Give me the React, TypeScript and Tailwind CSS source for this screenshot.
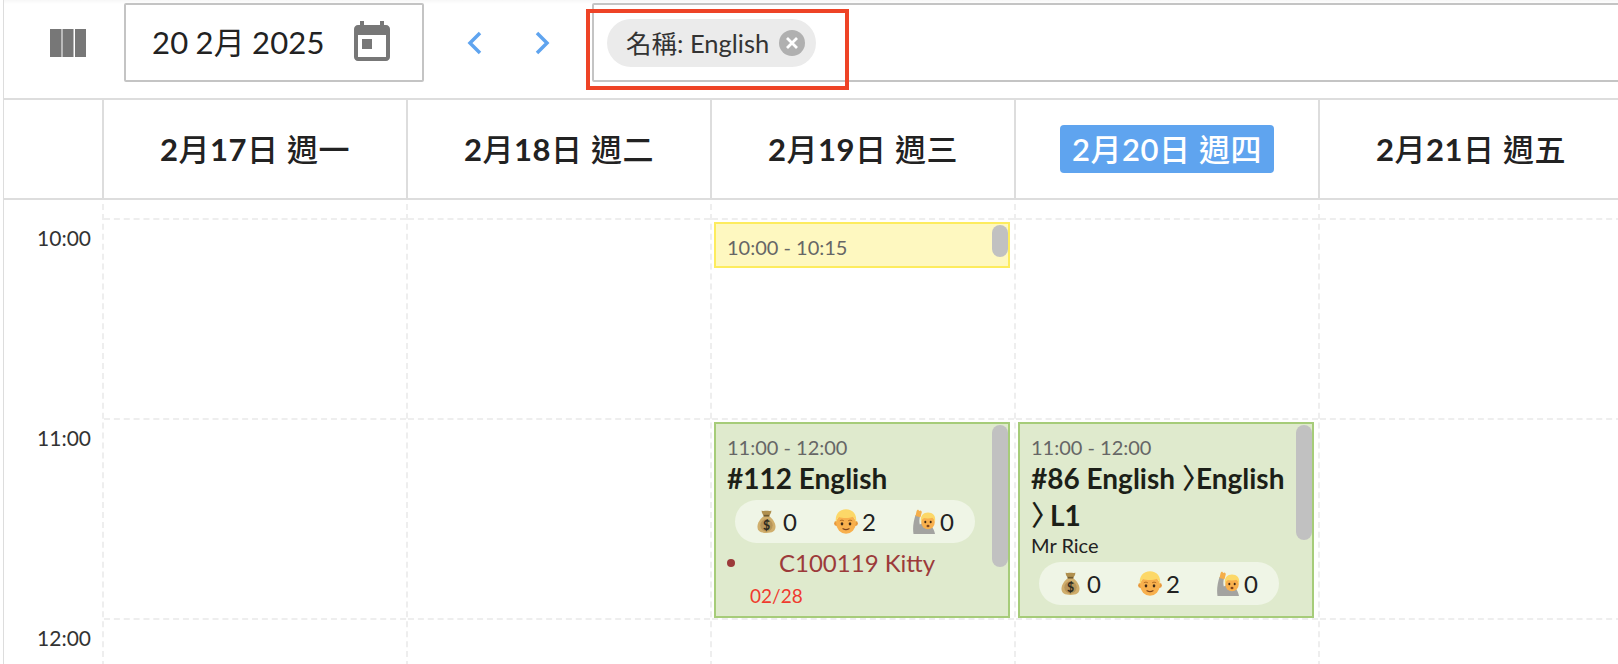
const FONT = "font-['Lato','Noto_Sans_CJK_TC',sans-serif]";

function MoneyBag() {
  return (
    <svg width="19" height="25" viewBox="0 0 20 26" className="shrink-0">
      <path d="M5 1.500c1.500 1 3.300.3 5 .3s3.500.7 5-.3c.5 2-1.200 4.300-2.300 5.700H7.300C6.200 5.800 4.500 3.500 5 1.500z" fill="#b0904f" />
      <path d="M7.500 7.200h5c4 2.800 7 7.400 7 11.300 0 4.700-3.500 6.500-9.500 6.500S.5 23.200.5 18.500c0-3.900 3-8.500 7-11.300z" fill="#d0ae6c" />
      <path d="M7 6h6v1.800H7z" fill="#6f5a30" />
      <circle cx="10" cy="17" r="6.500" fill="#b7955a" />
      <text x="10" y="21.500" fontSize="13" fontWeight="700" textAnchor="middle" fill="#2c2a20" fontFamily="Lato, sans-serif">$</text>
    </svg>
  );
}

function Boy() {
  return (
    <svg width="24" height="25" viewBox="0 0 24 25" className="shrink-0">
      <circle cx="2.500" cy="14.500" r="2.400" fill="#e8983a" />
      <circle cx="21.500" cy="14.500" r="2.400" fill="#e8983a" />
      <ellipse cx="12" cy="14.500" rx="9.800" ry="10.300" fill="#f8b04d" />
      <path d="M2 14C.5 5 5.500.3 12 .3S23.500 5 22 14c-.6-3-1.600-5-3-6.300-3.700 1.500-10 1.700-14 .3C3.500 9.200 2.600 11.300 2 14z" fill="#fcd868" />
      <path d="M5.800 11.800c1.200-.8 3-.8 4 0M14.200 11.800c1-.8 2.800-.8 4 0" stroke="#a8641f" strokeWidth=".9" fill="none" />
      <ellipse cx="8" cy="14.800" rx="1.300" ry="1.600" fill="#3e2a16" />
      <ellipse cx="16" cy="14.800" rx="1.300" ry="1.600" fill="#3e2a16" />
      <path d="M9 19.700c1.800 1 4.200 1 6 0" stroke="#7f441b" strokeWidth="1.200" fill="none" strokeLinecap="round" />
    </svg>
  );
}

function RaisingHand() {
  return (
    <svg width="24" height="25" viewBox="0 0 24 25" className="shrink-0">
      <path d="M.5 25C-.5 19 .5 12 2.500 6l4.500 1.500c-.8 3-.8 5.500-.2 8 2-1.300 3.700-1.600 5.700-1 4.500.4 8.500 4 9.500 10.500z" fill="#a3a3a0" />
      <path d="M2.500 7 3.500 2.600C3.800 1.100 4.800.4 5.600 1l.5.900L7.600 1.500c1 .5 1.500 1.500 1 2.500L7.500 8.200z" fill="#f5ae49" />
      <ellipse cx="15" cy="13" rx="6.800" ry="7.300" fill="#f8b04d" />
      <path d="M8 13C7 6.500 10.500 3.600 15 3.600s8.200 2.900 7 9.400c-.5-2-1.400-3.500-2.700-4.300-2.700 1-6 1-8.300.3C9.700 9.700 8.600 11.200 8 13z" fill="#fcd868" />
      <ellipse cx="12.300" cy="13" rx="1" ry="1.200" fill="#3e2a16" />
      <ellipse cx="17.700" cy="13" rx="1" ry="1.200" fill="#3e2a16" />
      <ellipse cx="15" cy="17" rx="1.500" ry="1.200" fill="#7f441b" />
    </svg>
  );
}

function Stats() {
  return (
    <div className="flex h-[43px] w-[240px] items-center rounded-full bg-[#eff5e6] pl-[22px] text-[24px] leading-none text-[#222]">
      <span className="flex w-[77px] items-center gap-[7px]"><MoneyBag />0</span>
      <span className="flex w-[79px] items-center gap-[4px]"><Boy />2</span>
      <span className="flex items-center gap-[3px]"><RaisingHand />0</span>
    </div>
  );
}

function Scrollbar({ h }: { h: string }) {
  return <div className={`absolute top-0 right-0 w-4 rounded-full bg-[#c1c1c1] ${h}`} />;
}

const days: [string, string, string, boolean][] = [
  ["2", "17", "週一", false],
  ["2", "18", "週二", false],
  ["2", "19", "週三", false],
  ["2", "20", "週四", true],
  ["2", "21", "週五", false],
];

function DayLabel({ m, d, w }: { m: string; d: string; w: string }) {
  return (
    <>
      {m}
      <span className="font-medium">月</span>
      {d}
      <span className="font-medium">日 {w}</span>
    </>
  );
}

function HourCells() {
  return (
    <>
      {[0, 1, 2].map((i) => (
        <div key={i} className="h-[200px] border-t-2 border-dashed border-[#eeeeee]" />
      ))}
    </>
  );
}

function EventEnglish112() {
  return (
    <div className="absolute top-[218px] left-[2px] h-[196px] w-[296px] border-2 border-[#a6cc79] bg-[#dfeacd] pl-[11px]">
      <div className="absolute top-[1px] right-0 h-[142px] w-4"><Scrollbar h="h-[142px]" /></div>
      <div className="mt-[11px] text-[20px] leading-[24px] text-[#666]">11:00 - 12:00</div>
      <div className="mt-[1px] text-[28px] leading-[37px] font-bold text-[#1c1f18]">#112 English</div>
      <div className="mt-[3px] ml-[8px]"><Stats /></div>
      <div className="mt-[4px] flex h-[32px] items-center text-[24px] text-[#9c3a3a]">
        <span className="h-2 w-2 rounded-full bg-[#9c3a3a]" />
        <span className="ml-[44px]">C100119 Kitty</span>
      </div>
      <div className="mt-[5px] ml-[23px] text-[19px] leading-[24px] text-[#ef3a2e]">02/28</div>
    </div>
  );
}

function EventEnglish86() {
  return (
    <div className="absolute top-[218px] left-[2px] h-[196px] w-[296px] border-2 border-[#a6cc79] bg-[#dfeacd] pl-[11px]">
      <div className="absolute top-[1px] right-0 h-[115px] w-4"><Scrollbar h="h-[115px]" /></div>
      <div className="mt-[11px] text-[20px] leading-[24px] text-[#666]">11:00 - 12:00</div>
      <div className="mt-[1px] w-[262px] text-[28px] leading-[37px] font-bold text-[#1c1f18]">
        #86 English <span className="font-medium tracking-[-14px]">〉</span>English <span className="font-medium tracking-[-9px]">〉</span>L1
      </div>
      <div className="text-[20px] leading-[23px] text-[#222]">Mr Rice</div>
      <div className="mt-[5px] ml-[8px]"><Stats /></div>
    </div>
  );
}

export default function App() {
  return (
    <div className={`${FONT} h-[664px] w-[1618px] overflow-hidden bg-white pl-[3px]`}>
      <div className="h-full border-l border-[#dddddd]">
        <div className="flex h-[98px] bg-gradient-to-b from-[#f7f7f7] to-white to-[4px]">
          <svg width="36" height="28" viewBox="0 0 36 28" className="mt-[29px] ml-[46px]">
            <path d="M0 0h11.500v28H0zM12.500 0h11v28h-11zM25 0h11v28H25z" fill="#777" />
          </svg>
          <div className="mt-[3px] ml-[38px] flex h-[79px] w-[300px] items-center rounded-[2px] border-2 border-[#c4c4c4] pl-[26px]">
            <span className="text-[31px] tracking-[0.2px] [word-spacing:-1px] text-[#222]">20 2月 2025</span>
            <svg width="48" height="48" viewBox="0 0 24 24" className="mr-[26px] ml-auto">
              <path d="M19 3h-1V1h-2v2H8V1H6v2H5c-1.110 0-1.990.9-1.990 2L3 19c0 1.100.89 2 2 2h14c1.100 0 2-.9 2-2V5c0-1.100-.9-2-2-2zm0 16H5V8h14v11zM7 10h5v5H7z" fill="#777" />
            </svg>
          </div>
          <svg width="18" height="26" viewBox="0 0 18 26" className="mt-[30px] ml-[41px]">
            <path d="M15 3 5 13l10 10" stroke="#5fa4ef" strokeWidth="3.500" fill="none" />
          </svg>
          <svg width="18" height="26" viewBox="0 0 18 26" className="mt-[30px] ml-[51px]">
            <path d="M3 3l10 10L3 23" stroke="#5fa4ef" strokeWidth="3.500" fill="none" />
          </svg>
          <div className="relative mt-[3px] mr-[-20px] ml-[40px] h-[79px] flex-1 rounded-[2px] border-2 border-[#c4c4c4]">
            <div className="mt-[14px] ml-[13px] flex h-[48px] w-[209px] items-center rounded-full bg-[#ebebeb] pl-[19px] text-[25.5px] text-[#333]">
              <span className="whitespace-nowrap">名稱: English</span>
              <span className="ml-[10px] flex h-[26px] w-[26px] shrink-0 items-center justify-center rounded-full bg-[#b0b0b0]">
                <svg width="14" height="14" viewBox="0 0 14 14"><path d="M2 2l10 10m0-10L2 12" stroke="#fff" strokeWidth="2.800" /></svg>
              </span>
            </div>
            <div className="absolute top-[4px] left-[-8px] h-[81px] w-[263px] border-4 border-[#ee4326]" />
          </div>
        </div>

        <div className="grid h-[102px] grid-cols-[98px_repeat(5,304px)] border-y-2 border-[#dddddd]">
          <div />
          {days.map(([m, d, w, today]) => (
            <div key={d} className="flex items-center justify-center border-l-2 border-[#dddddd] text-[31px] leading-none font-bold tracking-[0.5px] text-[#222]">
              {today ? (
                <span className="flex h-[48px] w-[214px] items-center justify-center rounded-[4px] bg-[#5fa4ef] font-semibold text-white"><span><DayLabel m={m} d={d} w={w} /></span></span>
              ) : (
                <span><DayLabel m={m} d={d} w={w} /></span>
              )}
            </div>
          ))}
        </div>

        <div className="grid grid-cols-[98px_repeat(5,304px)] pt-[4px]">
          <div className="pt-[22px] pr-[11px] text-right text-[21px] leading-[24px] text-[#333]">
            <div className="h-[200px]">10:00</div>
            <div className="h-[200px]">11:00</div>
            <div className="h-[200px]">12:00</div>
          </div>
          {days.map(([, d], i) => (
            <div key={d} className="relative border-l-2 border-dashed border-[#eeeeee] pt-[14px]">
              <HourCells />
              {i === 2 && (
                <>
                  <div className="absolute top-[18px] left-[2px] h-[46px] w-[296px] border-2 border-[#fdec5e] bg-[#fef8c0] pt-[11px] pl-[11px] text-[20px] leading-[24px] text-[#666]">
                    10:00 - 10:15
                    <div className="absolute top-[1px] right-0 h-[32px] w-4"><Scrollbar h="h-[32px]" /></div>
                  </div>
                  <EventEnglish112 />
                </>
              )}
              {i === 3 && <EventEnglish86 />}
            </div>
          ))}
        </div>
      </div>
    </div>
  );
}
